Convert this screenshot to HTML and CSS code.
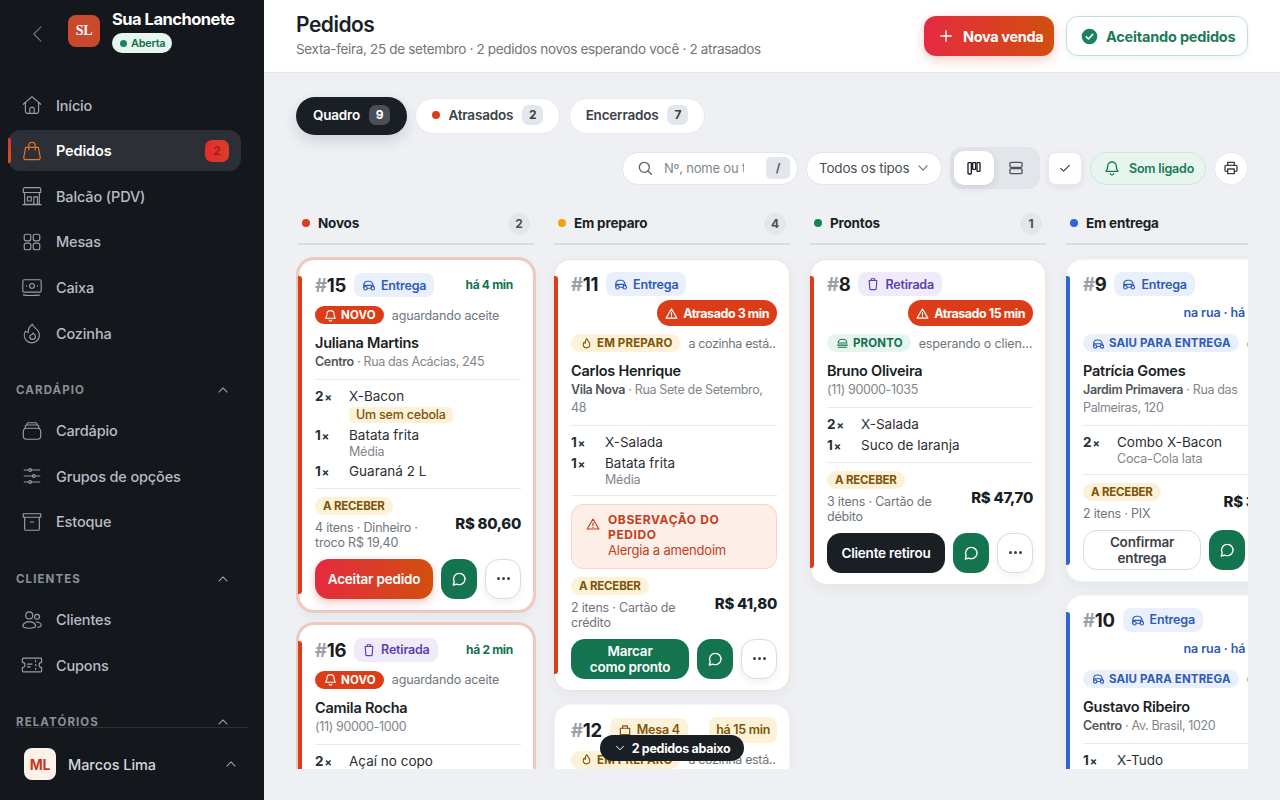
FILE: index.html
```html
<!DOCTYPE html>
<html lang="pt-BR">
<head>
    <meta charset="UTF-8">
    <meta name="viewport" content="width=device-width, initial-scale=1.0">
    <title>Pedidos</title>
    <link rel="stylesheet" href="styles.css">
</head>
<body>

<!-- Icon sprite -->
<svg class="sprite" xmlns="http://www.w3.org/2000/svg">
    <symbol id="i-back" viewBox="0 0 24 24"><path d="M15.5 3.5 7 12l8.5 8.5"/></symbol>
    <symbol id="i-home" viewBox="0 0 24 24"><path d="M2.5 11.2 12 2.8l9.5 8.4"/><path d="M4.8 9.4v9.8a2 2 0 0 0 2 2h10.4a2 2 0 0 0 2-2V9.4"/><path d="M9.6 21.2v-5a1.6 1.6 0 0 1 1.6-1.6h1.6a1.6 1.6 0 0 1 1.6 1.6v5"/></symbol>
    <symbol id="i-bag" viewBox="0 0 24 24"><path d="M5 8h14l2 11a2 2 0 0 1-2 2.4H5A2 2 0 0 1 3 19z"/><path d="M8.5 11V6a3.5 3.5 0 0 1 7 0v5"/></symbol>
    <symbol id="i-store" viewBox="0 0 24 24"><path d="M4.5 2.8h15a2 2 0 0 1 2 2v3.4h-19V4.8a2 2 0 0 1 2-2z"/><path d="M4 8.2v13h16v-13"/><path d="M2 21.4h20"/><path d="M14 21v-8h4v8"/><path d="M7 13h4.2v4.4H7z"/></symbol>
    <symbol id="i-grid" viewBox="0 0 24 24"><rect x="3.5" y="3.5" width="7.2" height="7.2" rx="2.2"/><rect x="13.3" y="3.5" width="7.2" height="7.2" rx="2.2"/><rect x="3.5" y="13.3" width="7.2" height="7.2" rx="2.2"/><rect x="13.3" y="13.3" width="7.2" height="7.2" rx="2.2"/></symbol>
    <symbol id="i-cash" viewBox="0 0 24 24"><rect x="2" y="3" width="20" height="13.5" rx="1.5"/><circle cx="12" cy="9.7" r="2.6"/><path d="M5.8 9.7h.4M17.8 9.7h.4"/><path d="M2.5 19.5c6 1.5 12 .3 17.5.3"/></symbol>
    <symbol id="i-flame" viewBox="0 0 24 24"><path d="M12.5 2.5c.3 3 4 4.2 6 7a8.3 8.3 0 1 1-13.6.3c.8 1.1 2 1.7 3.1 1.7-.2-3.5 1.5-7 4.5-9z"/><path d="M12.5 19a3.3 3.3 0 0 0 3.3-3.3c0-1.7-1.3-2.7-2.8-3.7-.2 1.4-1 2-2.2 2.2-.7.3-1.2 1-1.2 1.8a3 3 0 0 0 2.9 3z"/></symbol>
    <symbol id="i-stack" viewBox="0 0 24 24"><rect x="2.5" y="9" width="19" height="12" rx="3.5"/><path d="M4.5 9V7.5a2 2 0 0 1 2-2h11a2 2 0 0 1 2 2V9"/><path d="M6.5 5.5v-1A1.5 1.5 0 0 1 8 3h8a1.5 1.5 0 0 1 1.5 1.5v1"/></symbol>
    <symbol id="i-sliders" viewBox="0 0 24 24"><path d="M3.5 5.5h5M11.5 5.5h9M3.5 12h9M15.5 12h5M3.5 18.5h5M11.5 18.5h9"/><circle cx="10" cy="5.5" r="1.5"/><circle cx="14" cy="12" r="1.5"/><circle cx="10" cy="18.5" r="1.5"/></symbol>
    <symbol id="i-archive" viewBox="0 0 24 24"><path d="M2.5 3h19v3.8h-19z"/><path d="M4 6.8v12.7a1.5 1.5 0 0 0 1.5 1.5h13a1.5 1.5 0 0 0 1.5-1.5V6.8"/><path d="M10 12h4"/></symbol>
    <symbol id="i-users" viewBox="0 0 24 24"><circle cx="9" cy="7" r="3.8"/><circle cx="17.5" cy="8.5" r="2.7"/><path d="M9 13.8c-3.8 0-7 2.2-7 4.6 0 1.7 3 2.6 7 2.6s7-.9 7-2.6c0-2.4-3.2-4.6-7-4.6z"/><path d="M16.5 14.2c3 0 5.5 1.5 5.5 3.5 0 1.3-1.5 2-3.8 2.2"/></symbol>
    <symbol id="i-ticket" viewBox="0 0 24 24"><path d="M2.5 4.5h19a1 1 0 0 1 1 1v3.7a2.8 2.8 0 0 0 0 5.6v3.7a1 1 0 0 1-1 1h-19a1 1 0 0 1-1-1v-3.7a2.8 2.8 0 0 0 0-5.6V5.5a1 1 0 0 1 1-1z"/><path d="M16 7v1.5M16 11.2v1.6M16 15.5V17M7 11h5M7 14h3"/></symbol>
    <symbol id="i-up" viewBox="0 0 24 24"><path d="m5 15.5 7-7 7 7"/></symbol>
    <symbol id="i-down" viewBox="0 0 24 24"><path d="m5 8.5 7 7 7-7"/></symbol>
    <symbol id="i-plus" viewBox="0 0 24 24"><path d="M12 4v16M4 12h16"/></symbol>
    <symbol id="i-search" viewBox="0 0 24 24"><circle cx="11" cy="11" r="7.5"/><path d="m16.5 16.5 5 5"/></symbol>
    <symbol id="i-kanban" viewBox="0 0 24 24"><rect x="3" y="4" width="5" height="17" rx="1"/><rect x="10" y="4" width="4.5" height="10" rx=".8"/><rect x="16.5" y="4" width="4.5" height="13" rx="1"/></symbol>
    <symbol id="i-rows" viewBox="0 0 24 24"><rect x="3" y="3.5" width="18" height="7.5" rx="1.5"/><rect x="3" y="13" width="18" height="7.5" rx="1.5"/></symbol>
    <symbol id="i-check" viewBox="0 0 24 24"><path d="m4.5 12.5 5 5 10-10"/></symbol>
    <symbol id="i-bell" viewBox="0 0 24 24"><path d="M12 3a6.5 6.5 0 0 0-6.5 6.5c0 4.5-1.5 6-2.5 7.5h18c-1-1.5-2.5-3-2.5-7.5A6.5 6.5 0 0 0 12 3z"/><path d="M9.5 20.5a2.6 2.6 0 0 0 5 0"/></symbol>
    <symbol id="i-print" viewBox="0 0 24 24"><path d="M7 8V3.5h10V8"/><path d="M7 17H4.5A1.5 1.5 0 0 1 3 15.500v-6A1.5 1.5 0 0 1 4.5 8h15A1.5 1.5 0 0 1 21 9.500v6a1.5 1.5 0 0 1-1.5 1.5H17"/><path d="M7 13.5h10v7H7z"/></symbol>
    <symbol id="i-scooter" viewBox="0 0 24 24"><circle cx="6" cy="17.5" r="3"/><circle cx="18.5" cy="17.5" r="3"/><path d="M3 16v-3.5C3 8.5 6 5.5 10 5.5h3c2.5 0 4.3 1.5 5 4l2 5.5"/><path d="M9 17.5h6.5l1.5-5H4"/></symbol>
    <symbol id="i-cup" viewBox="0 0 24 24"><path d="M5.5 6h13l-1 14a1.5 1.5 0 0 1-1.5 1.5H8A1.5 1.5 0 0 1 6.5 20z"/><path d="M9 6V3h6v3"/></symbol>
    <symbol id="i-alert" viewBox="0 0 24 24"><path d="M12 3.5 2 20.5h20z"/><path d="M12 10v5M12 17.6v.4"/></symbol>
    <symbol id="i-fire" viewBox="0 0 24 24"><path d="M12.5 3c.5 3 5.5 5.5 5.5 11a6 6 0 0 1-12 0c0-2 .8-3.5 1.8-4.5.3 1.3 1 2 2 2.2C9.5 8.5 10.5 5 12.5 3z"/></symbol>
    <symbol id="i-burger" viewBox="0 0 24 24"><path d="M4 11a8 7 0 0 1 16 0z"/><path d="M3 15h18"/><path d="M4.5 19h15"/></symbol>
    <symbol id="i-chat" viewBox="0 0 24 24"><path d="M12.5 3.5a8.5 8.5 0 1 1-3.8 16.1L3.5 21l1.3-5a8.5 8.5 0 0 1 7.7-12.500z"/></symbol>
    <symbol id="i-table" viewBox="0 0 24 24"><path d="M4 9h16v11H4z"/><path d="M8 9V5h8v4"/></symbol>
</svg>

<div class="app">

    <!-- Sidebar -->
    <aside class="sidebar">
        <div class="brand">
            <button class="back"><svg class="ico"><use href="#i-back"/></svg></button>
            <div class="logo">SL</div>
            <div class="brand-txt">
                <div class="brand-name">Sua Lanchonete</div>
                <span class="open-pill"><i></i>Aberta</span>
            </div>
        </div>

        <nav class="nav">
            <a class="nav-item"><svg class="ico"><use href="#i-home"/></svg>Início</a>
            <a class="nav-item active"><svg class="ico"><use href="#i-bag"/></svg>Pedidos<span class="nav-badge">2</span></a>
            <a class="nav-item"><svg class="ico"><use href="#i-store"/></svg>Balcão (PDV)</a>
            <a class="nav-item"><svg class="ico"><use href="#i-grid"/></svg>Mesas</a>
            <a class="nav-item"><svg class="ico"><use href="#i-cash"/></svg>Caixa</a>
            <a class="nav-item"><svg class="ico"><use href="#i-flame"/></svg>Cozinha</a>

            <div class="nav-head">CARDÁPIO<svg class="ico"><use href="#i-up"/></svg></div>
            <a class="nav-item"><svg class="ico"><use href="#i-stack"/></svg>Cardápio</a>
            <a class="nav-item"><svg class="ico"><use href="#i-sliders"/></svg>Grupos de opções</a>
            <a class="nav-item"><svg class="ico"><use href="#i-archive"/></svg>Estoque</a>

            <div class="nav-head">CLIENTES<svg class="ico"><use href="#i-up"/></svg></div>
            <a class="nav-item"><svg class="ico"><use href="#i-users"/></svg>Clientes</a>
            <a class="nav-item"><svg class="ico"><use href="#i-ticket"/></svg>Cupons</a>

            <div class="nav-head">RELATÓRIOS<svg class="ico"><use href="#i-up"/></svg></div>
        </nav>

        <div class="user">
            <div class="avatar">ML</div>
            <span class="user-name">Marcos Lima</span>
            <svg class="ico"><use href="#i-up"/></svg>
        </div>
    </aside>

    <main class="main">
        <header class="topbar">
            <div>
                <h1>Pedidos</h1>
                <p>Sexta-feira, 25 de setembro · 2 pedidos novos esperando você · 2 atrasados</p>
            </div>
            <div class="top-actions">
                <button class="btn-new"><svg class="ico"><use href="#i-plus"/></svg>Nova venda</button>
                <button class="btn-accepting">
                    <svg class="ico" viewBox="0 0 24 24"><circle cx="12" cy="12" r="10" class="solid"/><path d="m7.5 12.5 3 3 6-6.5" class="tick"/></svg>
                    Aceitando pedidos
                </button>
            </div>
        </header>

        <section class="content">
            <div class="tabs">
                <a class="tab on">Quadro<span class="tab-n">9</span></a>
                <a class="tab"><i class="dot red"></i>Atrasados<span class="tab-n">2</span></a>
                <a class="tab">Encerrados<span class="tab-n">7</span></a>
            </div>

            <div class="toolbar">
                <div class="search">
                    <svg class="ico"><use href="#i-search"/></svg>
                    <span class="ph">Nº, nome ou t</span>
                    <kbd>/</kbd>
                </div>
                <div class="select">Todos os tipos<svg class="ico"><use href="#i-down"/></svg></div>
                <div class="seg">
                    <span class="seg-btn on"><svg class="ico"><use href="#i-kanban"/></svg></span>
                    <span class="seg-btn"><svg class="ico"><use href="#i-rows"/></svg></span>
                </div>
                <span class="sq-btn"><svg class="ico"><use href="#i-check"/></svg></span>
                <span class="sound"><svg class="ico"><use href="#i-bell"/></svg>Som ligado</span>
                <span class="round-btn"><svg class="ico"><use href="#i-print"/></svg></span>
            </div>

            <div class="board">

                <!-- Novos -->
                <div class="col">
                    <div class="col-head"><i class="dot red"></i>Novos<span class="col-n">2</span></div>
                    <div class="cards">
                        <article class="card ring bar-red">
                            <div class="card-top">
                                <span class="num"><i>#</i>15</span>
                                <span class="chip blue"><svg class="ico"><use href="#i-scooter"/></svg>Entrega</span>
                                <span class="age">há 4 min</span>
                            </div>
                            <div class="status">
                                <span class="st st-new"><svg class="ico"><use href="#i-bell"/></svg>NOVO</span>
                                <span class="st-note">aguardando aceite</span>
                            </div>
                            <p class="cust">Juliana Martins</p>
                            <p class="addr"><b>Centro</b> · Rua das Acácias, 245</p>
                            <ul class="items">
                                <li><span class="qty">2<small>×</small></span><div>X-Bacon<em class="note">Um sem cebola</em></div></li>
                                <li><span class="qty">1<small>×</small></span><div>Batata frita<span class="sub">Média</span></div></li>
                                <li><span class="qty">1<small>×</small></span><div>Guaraná 2 L</div></li>
                            </ul>
                            <div class="pay">
                                <div class="pay-l"><span class="pay-tag">A RECEBER</span><p>4 itens · Dinheiro · troco R$ 19,40</p></div>
                                <strong class="price">R$ 80,60</strong>
                            </div>
                            <div class="acts">
                                <button class="act act-red">Aceitar pedido</button>
                                <button class="act-ico green"><svg class="ico"><use href="#i-chat"/></svg></button>
                                <button class="act-ico more"><span></span><span></span><span></span></button>
                            </div>
                        </article>

                        <article class="card ring bar-red">
                            <div class="card-top">
                                <span class="num"><i>#</i>16</span>
                                <span class="chip purple"><svg class="ico"><use href="#i-cup"/></svg>Retirada</span>
                                <span class="age">há 2 min</span>
                            </div>
                            <div class="status">
                                <span class="st st-new"><svg class="ico"><use href="#i-bell"/></svg>NOVO</span>
                                <span class="st-note">aguardando aceite</span>
                            </div>
                            <p class="cust">Camila Rocha</p>
                            <p class="addr">(11) 90000-1000</p>
                            <ul class="items">
                                <li><span class="qty">2<small>×</small></span><div>Açaí no copo</div></li>
                            </ul>
                        </article>
                    </div>
                </div>

                <!-- Em preparo -->
                <div class="col">
                    <div class="col-head"><i class="dot amber"></i>Em preparo<span class="col-n">4</span></div>
                    <div class="cards">
                        <article class="card late bar-red">
                            <div class="card-top">
                                <span class="num"><i>#</i>11</span>
                                <span class="chip blue"><svg class="ico"><use href="#i-scooter"/></svg>Entrega</span>
                                <span class="late-pill"><svg class="ico"><use href="#i-alert"/></svg>Atrasado 3 min</span>
                            </div>
                            <div class="status">
                                <span class="st st-prep"><svg class="ico"><use href="#i-fire"/></svg>EM PREPARO</span>
                                <span class="st-note">a cozinha está…</span>
                            </div>
                            <p class="cust">Carlos Henrique</p>
                            <p class="addr"><b>Vila Nova</b> · Rua Sete de Setembro, 48</p>
                            <ul class="items">
                                <li><span class="qty">1<small>×</small></span><div>X-Salada</div></li>
                                <li><span class="qty">1<small>×</small></span><div>Batata frita<span class="sub">Média</span></div></li>
                            </ul>
                            <div class="obs">
                                <svg class="ico"><use href="#i-alert"/></svg>
                                <div><strong>OBSERVAÇÃO DO PEDIDO</strong><span>Alergia a amendoim</span></div>
                            </div>
                            <div class="pay">
                                <div class="pay-l"><span class="pay-tag">A RECEBER</span><p>2 itens · Cartão de crédito</p></div>
                                <strong class="price">R$ 41,80</strong>
                            </div>
                            <div class="acts">
                                <button class="act act-green">Marcar<br>como pronto</button>
                                <button class="act-ico green"><svg class="ico"><use href="#i-chat"/></svg></button>
                                <button class="act-ico more"><span></span><span></span><span></span></button>
                            </div>
                        </article>

                        <article class="card">
                            <div class="card-top">
                                <span class="num"><i>#</i>12</span>
                                <span class="chip amber"><svg class="ico"><use href="#i-table"/></svg>Mesa 4</span>
                                <span class="age age-warn">há 15 min</span>
                            </div>
                            <div class="status">
                                <span class="st st-prep"><svg class="ico"><use href="#i-fire"/></svg>EM PREPARO</span>
                                <span class="st-note">a cozinha está…</span>
                            </div>
                        </article>
                    </div>
                    <div class="more-below"><svg class="ico"><use href="#i-down"/></svg>2 pedidos abaixo</div>
                </div>

                <!-- Prontos -->
                <div class="col">
                    <div class="col-head"><i class="dot green"></i>Prontos<span class="col-n">1</span></div>
                    <div class="cards">
                        <article class="card late bar-red">
                            <div class="card-top">
                                <span class="num"><i>#</i>8</span>
                                <span class="chip purple"><svg class="ico"><use href="#i-cup"/></svg>Retirada</span>
                                <span class="late-pill"><svg class="ico"><use href="#i-alert"/></svg>Atrasado 15 min</span>
                            </div>
                            <div class="status">
                                <span class="st st-ready"><svg class="ico"><use href="#i-burger"/></svg>PRONTO</span>
                                <span class="st-note">esperando o clien…</span>
                            </div>
                            <p class="cust">Bruno Oliveira</p>
                            <p class="addr">(11) 90000-1035</p>
                            <ul class="items">
                                <li><span class="qty">2<small>×</small></span><div>X-Salada</div></li>
                                <li><span class="qty">1<small>×</small></span><div>Suco de laranja</div></li>
                            </ul>
                            <div class="pay">
                                <div class="pay-l"><span class="pay-tag">A RECEBER</span><p>3 itens · Cartão de débito</p></div>
                                <strong class="price">R$ 47,70</strong>
                            </div>
                            <div class="acts">
                                <button class="act act-dark">Cliente retirou</button>
                                <button class="act-ico green"><svg class="ico"><use href="#i-chat"/></svg></button>
                                <button class="act-ico more"><span></span><span></span><span></span></button>
                            </div>
                        </article>
                    </div>
                </div>

                <!-- Em entrega -->
                <div class="col">
                    <div class="col-head"><i class="dot blue-dot"></i>Em entrega<span class="col-n">2</span></div>
                    <div class="cards">
                        <article class="card bar-blue">
                            <div class="card-top">
                                <span class="num"><i>#</i>9</span>
                                <span class="chip blue"><svg class="ico"><use href="#i-scooter"/></svg>Entrega</span>
                                <span class="age age-blue">na rua · há 3 min</span>
                            </div>
                            <div class="status">
                                <span class="st st-road"><svg class="ico"><use href="#i-scooter"/></svg>SAIU PARA ENTREGA</span>
                                <span class="st-note">com o entregador</span>
                            </div>
                            <p class="cust">Patrícia Gomes</p>
                            <p class="addr"><b>Jardim Primavera</b> · Rua das Palmeiras, 120</p>
                            <ul class="items">
                                <li><span class="qty">2<small>×</small></span><div>Combo X-Bacon<span class="sub">Coca-Cola lata</span></div></li>
                            </ul>
                            <div class="pay">
                                <div class="pay-l"><span class="pay-tag">A RECEBER</span><p>2 itens · PIX</p></div>
                                <strong class="price">R$ 39,90</strong>
                            </div>
                            <div class="acts">
                                <button class="act act-white">Confirmar<br>entrega</button>
                                <button class="act-ico green"><svg class="ico"><use href="#i-chat"/></svg></button>
                                <button class="act-ico more"><span></span><span></span><span></span></button>
                            </div>
                        </article>

                        <article class="card bar-blue">
                            <div class="card-top">
                                <span class="num"><i>#</i>10</span>
                                <span class="chip blue"><svg class="ico"><use href="#i-scooter"/></svg>Entrega</span>
                                <span class="age age-blue">na rua · há 2 min</span>
                            </div>
                            <div class="status">
                                <span class="st st-road"><svg class="ico"><use href="#i-scooter"/></svg>SAIU PARA ENTREGA</span>
                                <span class="st-note">com o entregador</span>
                            </div>
                            <p class="cust">Gustavo Ribeiro</p>
                            <p class="addr"><b>Centro</b> · Av. Brasil, 1020</p>
                            <ul class="items">
                                <li><span class="qty">1<small>×</small></span><div>X-Tudo</div></li>
                            </ul>
                        </article>
                    </div>
                </div>
            </div>
        </section>
    </main>
</div>

</body>
</html>
```

FILE: styles.css
```css
* {
    margin: 0;
    padding: 0;
    box-sizing: border-box;
}
html, body {
    height: 100%;
    overflow: hidden;
}
body {
    font-family: Inter, "Noto Sans", Arial, sans-serif;
    background-color: #eef0f4;
    color: #1a1f25;
    font-size: 13px;
    letter-spacing: -0.2px;
}
button {
    font-family: inherit;
    letter-spacing: inherit;
    border: none;
    background: none;
}
ul {
    list-style: none;
}
.sprite {
    display: none;
}
.ico {
    display: block;
    flex: none;
    width: 16px;
    height: 16px;
    fill: none;
    stroke: currentColor;
    stroke-width: 2;
    stroke-linecap: round;
    stroke-linejoin: round;
}
.app {
    display: flex;
    height: 100vh;
}

/* Sidebar */
.sidebar {
    width: 264px;
    flex: none;
    display: flex;
    flex-direction: column;
    background-color: #14171c;
    color: #b8bcc6;
}
.brand {
    flex: none;
    display: flex;
    gap: 12px;
    height: 84.7px;
    padding: 8px 0 0 28px;
}
.back {
    color: #6f747c;
    margin-top: 16px;
    margin-right: 8px;
    height: 20px;
}
.back .ico {
    width: 20px;
    height: 20px;
    stroke-width: 1.4;
}
.logo {
    width: 32px;
    height: 32px;
    margin-top: 7px;
    border-radius: 8px;
    background-color: #c9492d;
    color: #fff;
    font: bold 14px "Liberation Serif", serif;
    display: flex;
    align-items: center;
    justify-content: center;
}
.brand-name {
    color: #fff;
    font-size: 16.5px;
    font-weight: 700;
    line-height: 22px;
    letter-spacing: -0.5px;
}
.open-pill {
    display: inline-flex;
    align-items: center;
    gap: 4px;
    height: 20px;
    margin-top: 3px;
    padding: 0 7px 0 8px;
    border-radius: 10px;
    background-color: #e6f6ef;
    color: #13704f;
    font-size: 11px;
    font-weight: 600;
    letter-spacing: -0.3px;
}
.open-pill i {
    width: 7px;
    height: 7px;
    border-radius: 50%;
    background-color: #18875f;
}
.nav {
    flex: 1;
    min-height: 0;
    overflow: hidden;
    padding: 0 23px 0 8px;
    display: flex;
    flex-direction: column;
    gap: 4.6px;
}
.nav-item {
    position: relative;
    flex: none;
    height: 41px;
    display: flex;
    align-items: center;
    gap: 13px;
    padding-left: 13px;
    border-radius: 12px;
    font-size: 14.5px;
    font-weight: 500;
    letter-spacing: -0.15px;
}
.nav-item .ico {
    width: 22px;
    height: 22px;
    stroke-width: 1.25;
    color: #9a9ea6;
}
.nav-item.active {
    background-color: #2c2f35;
    color: #fff;
    font-weight: 600;
}
.nav-item.active .ico {
    color: #e8762a;
}
.nav-item.active::before {
    content: "";
    position: absolute;
    left: 0;
    top: 8px;
    bottom: 8px;
    width: 3px;
    border-radius: 0 2px 2px 0;
    background: linear-gradient(#e5293f, #d9560f);
}
.nav-badge {
    margin-left: auto;
    margin-right: 12px;
    width: 24px;
    height: 22px;
    border-radius: 7px;
    background: linear-gradient(90deg, #e32c30, #d93f25);
    color: #a81d22;
    font-size: 12px;
    font-weight: 700;
    text-align: center;
    line-height: 22px;
}
.nav-head {
    flex: none;
    height: 20px;
    margin: 22px 0 5.4px;
    padding: 0 11px 0 8px;
    display: flex;
    align-items: center;
    justify-content: space-between;
    color: #8b8f96;
    font-size: 11.5px;
    font-weight: 700;
    letter-spacing: 1.1px;
}
.nav-head .ico {
    width: 14px;
    height: 14px;
    stroke-width: 1.8;
    color: #a2a6ad;
}
.user {
    flex: none;
    height: 73px;
    margin: 0 16px;
    padding: 0 10px 0 8px;
    border-top: 1px solid #2c2f35;
    display: flex;
    align-items: center;
    gap: 12px;
    color: #d5d7dc;
}
.avatar {
    width: 32px;
    height: 32px;
    border-radius: 8px;
    background-color: #fdf1ea;
    color: #c93a1c;
    font-size: 14px;
    font-weight: 700;
    display: flex;
    align-items: center;
    justify-content: center;
}
.user-name {
    flex: 1;
    font-size: 14.5px;
    font-weight: 500;
    letter-spacing: -0.05px;
}
.user .ico {
    width: 14px;
    height: 14px;
    stroke-width: 1.8;
    color: #a2a6ad;
}

/* Main */
.main {
    flex: 1;
    min-width: 0;
    display: flex;
    flex-direction: column;
}
.topbar {
    flex: none;
    height: 73px;
    padding: 0 32px 2px;
    background-color: #fff;
    border-bottom: 1px solid #e2e5e9;
    display: flex;
    align-items: center;
    justify-content: space-between;
}
.topbar h1 {
    font-size: 21px;
    font-weight: 600;
    line-height: 26px;
    letter-spacing: -0.5px;
}
.topbar p {
    margin-top: 2px;
    font-size: 13.5px;
    line-height: 18px;
    color: #70757c;
    letter-spacing: -0.32px;
}
.top-actions {
    display: flex;
    gap: 12px;
    margin-bottom: -2px;
}
.btn-new, .btn-accepting {
    height: 40px;
    border-radius: 12px;
    display: flex;
    align-items: center;
    font-size: 14.5px;
    font-weight: 700;
}
.btn-new {
    width: 130px;
    padding-left: 14px;
    gap: 9px;
    color: #fff;
    background: linear-gradient(90deg, #e52a40, #d14f0e);
    box-shadow: 0 4px 12px rgba(226, 60, 40, 0.25);
    letter-spacing: -0.35px;
}
.btn-accepting {
    width: 182px;
    padding-left: 14px;
    gap: 8px;
    color: #1a7a56;
    background-color: #fff;
    border: 1px solid #bfe0d2;
    box-shadow: 0 2px 6px rgba(20, 110, 80, 0.08);
}
.btn-accepting .ico {
    width: 17px;
    height: 17px;
}
.btn-accepting .solid {
    fill: #18835c;
    stroke: #18835c;
}
.btn-accepting .tick {
    stroke: #fff;
    stroke-width: 2.2;
}
.content {
    flex: 1;
    min-height: 0;
    display: flex;
    flex-direction: column;
    padding: 24px 32px 31px;
}
.tabs {
    display: flex;
    align-items: center;
    gap: 8.5px;
}
.tab {
    height: 36px;
    display: flex;
    align-items: center;
    gap: 8px;
    padding: 0 16px 2px;
    border-radius: 18px;
    background-color: #fff;
    border: 1px solid #e6e8ec;
    color: #3a4048;
    font-size: 13.5px;
    font-weight: 600;
}
.tab.on {
    height: 38px;
    padding: 0 17px 2px;
    border: none;
    border-radius: 19px;
    background-color: #1a1f25;
    color: #fff;
    box-shadow: 0 6px 14px rgba(26, 31, 37, 0.14);
}
.tab-n {
    min-width: 21px;
    height: 20px;
    margin-left: 1px;
    border-radius: 7px;
    background-color: #e3e6ea;
    color: #3a4048;
    font-size: 12px;
    font-weight: 700;
    line-height: 20px;
    text-align: center;
}
.tab.on .tab-n {
    background-color: #4b5057;
    color: #fff;
}
.dot {
    flex: none;
    width: 8px;
    height: 8px;
    border-radius: 50%;
}
.dot.red { background-color: #dc3d18; }
.dot.amber { background-color: #f3a20f; }
.dot.green { background-color: #14855b; }
.dot.blue-dot { background-color: #2f63d6; }
.toolbar {
    flex: none;
    margin-top: 12px;
    display: flex;
    align-items: center;
    justify-content: flex-end;
    gap: 8px;
}
.search, .select {
    height: 33px;
    display: flex;
    align-items: center;
    background-color: #fff;
    border: 1px solid #e2e5e9;
    border-radius: 16px;
    font-size: 13.5px;
    color: #4a4f57;
}
.search {
    width: 176px;
    padding: 0 7px 0 14px;
    gap: 11px;
}
.search .ico {
    color: #5c6168;
}
.ph {
    flex: none;
    width: 80px;
    margin-right: auto;
    font-size: 13px;
    color: #80858c;
    overflow: hidden;
    white-space: nowrap;
}
kbd {
    width: 24px;
    height: 22px;
    border-radius: 5px;
    background-color: #e3e6ea;
    color: #5c6168;
    font-family: inherit;
    font-size: 12px;
    font-weight: 700;
    text-align: center;
    line-height: 22px;
}
.select {
    width: 136px;
    justify-content: space-between;
    padding: 0 11px 0 12px;
}
.select .ico {
    width: 14px;
    height: 14px;
    color: #6b7078;
}
.seg {
    display: flex;
    gap: 2px;
    padding: 4px;
    background-color: #e2e5e9;
    border-radius: 12px;
}
.seg-btn {
    width: 40px;
    height: 34px;
    border-radius: 10px;
    display: flex;
    align-items: center;
    justify-content: center;
    color: #50555c;
}
.seg-btn.on {
    background-color: #fff;
    color: #1a1f25;
    box-shadow: 0 3px 8px rgba(26, 31, 37, 0.1);
}
.sq-btn, .round-btn {
    width: 34px;
    height: 33px;
    display: flex;
    align-items: center;
    justify-content: center;
    background-color: #fff;
    border: 1px solid #e6e8ec;
    color: #3a4048;
}
.sq-btn {
    border-radius: 8px;
    box-shadow: 0 2px 6px rgba(26, 31, 37, 0.08);
}
.sq-btn .ico {
    width: 14px;
    height: 14px;
}
.round-btn {
    border-radius: 50%;
}
.sound {
    width: 116px;
    height: 33px;
    display: flex;
    align-items: center;
    gap: 9px;
    padding-left: 13px;
    background-color: #e6f6ef;
    border: 1px solid #c8e8da;
    border-radius: 17px;
    color: #1a7a56;
    font-size: 12.5px;
    font-weight: 600;
}

/* Board */
.board {
    flex: 1;
    min-height: 0;
    margin-top: 8px;
    padding: 16px 0 0 2px;
    display: flex;
    gap: 20px;
    overflow: hidden;
}
.col {
    position: relative;
    flex: none;
    width: 236px;
}
.col-head {
    height: 32px;
    display: flex;
    align-items: flex-start;
    gap: 8px;
    padding: 0 4px 0;
    margin-bottom: 14px;
    border-bottom: 2px solid #d8dbe0;
    font-size: 13.5px;
    font-weight: 700;
    line-height: 20px;
}
.col-head .dot {
    margin-top: 6px;
}
.col-n {
    margin-left: auto;
    width: 22px;
    height: 22px;
    border-radius: 50%;
    background-color: #e3e6ea;
    color: #4a4f57;
    font-size: 12px;
    font-weight: 700;
    line-height: 22px;
    text-align: center;
}
.cards {
    display: flex;
    flex-direction: column;
    gap: 13px;
}
.card {
    position: relative;
    flex: none;
    padding: 12px 12px 11px 16px;
    background-color: #fff;
    border: 1px solid #f3f4f6;
    border-radius: 16px;
    box-shadow: 0 4px 14px rgba(26, 31, 37, 0.05);
}
.card.late {
    border-color: #f6e0d4;
}
.card.ring {
    border-color: #eec9bd;
    box-shadow: 0 0 0 2px #eec9bd, 0 6px 14px rgba(26, 31, 37, 0.05);
}
.bar-red::before, .bar-blue::before {
    content: "";
    position: absolute;
    left: -1px;
    top: 16px;
    bottom: 16px;
    width: 4px;
    border-radius: 0 3px 3px 0;
    background-color: #dc3d18;
}
.bar-blue::before {
    background-color: #2f63d6;
}
.card-top {
    display: flex;
    flex-wrap: wrap;
    align-items: center;
    gap: 4px 8px;
    min-height: 24px;
}
.num {
    font-size: 18.5px;
    font-weight: 700;
    letter-spacing: -0.3px;
}
.num i {
    font-style: normal;
    color: #9aa0a8;
}
.chip {
    height: 24px;
    display: flex;
    align-items: center;
    gap: 5px;
    padding: 0 8px;
    border-radius: 8px;
    font-size: 12.5px;
    font-weight: 600;
}
.chip .ico {
    width: 14px;
    height: 14px;
}
.chip.blue { background-color: #e9f0fc; color: #2f5bb7; }
.chip.purple { background-color: #efebfb; color: #5a41b0; }
.chip.amber { background-color: #fdf1d8; color: #7d5408; }
.age {
    margin-left: auto;
    height: 26px;
    padding: 0 8px;
    border-radius: 8px;
    color: #13704f;
    font-size: 12px;
    font-weight: 700;
    line-height: 26px;
    letter-spacing: -0.3px;
}
.age-warn {
    background-color: #fdf1d8;
    color: #7d5408;
    font-size: 12.5px;
    font-weight: 600;
    padding: 0 7px;
}
.age-blue {
    color: #2f5bb7;
    font-size: 12.5px;
    font-weight: 600;
    letter-spacing: -0.1px;
}
.late-pill {
    margin-left: auto;
    height: 26px;
    display: flex;
    align-items: center;
    gap: 5px;
    padding: 0 8px;
    border-radius: 13px;
    background-color: #dc3d18;
    color: #fff;
    font-size: 12.5px;
    font-weight: 700;
    letter-spacing: -0.45px;
    white-space: nowrap;
}
.late-pill .ico {
    width: 13px;
    height: 13px;
}
.status {
    margin-top: 8px;
    display: flex;
    align-items: center;
    gap: 8px;
    height: 18px;
}
.st {
    flex: none;
    height: 18px;
    display: flex;
    align-items: center;
    gap: 4px;
    padding: 0 8px 0 9px;
    border-radius: 9px;
    font-size: 11.5px;
    font-weight: 700;
    letter-spacing: 0.15px;
}
.st .ico {
    width: 13px;
    height: 13px;
}
.st-new { background-color: #dc3d18; color: #fff; }
.st-prep { background-color: #fdf1d8; color: #7d5408; }
.st-ready { background-color: #e6f6ef; color: #13704f; }
.st-road { background-color: #e9f0fc; color: #2f5bb7; }
.st-note {
    min-width: 0;
    overflow: hidden;
    white-space: nowrap;
    color: #70757c;
    font-size: 12.5px;
    letter-spacing: -0.15px;
}
.st-prep + .st-note {
    letter-spacing: -0.35px;
}
.cust {
    margin-top: 9px;
    font-size: 14.5px;
    font-weight: 600;
    line-height: 20px;
    letter-spacing: -0.25px;
}
.addr {
    font-size: 12.5px;
    line-height: 18px;
    color: #80858c;
    letter-spacing: -0.35px;
}
.addr b {
    color: #50555c;
    font-weight: 600;
}
.items {
    margin-top: 8px;
    padding: 7px 0 8px;
    border-top: 1px solid #e6e8ec;
    border-bottom: 1px solid #e6e8ec;
    display: flex;
    flex-direction: column;
    gap: 3px;
    font-size: 13.5px;
    line-height: 18px;
    letter-spacing: 0;
    color: #2a2f36;
}
.items li {
    display: flex;
}
.qty {
    flex: none;
    width: 34px;
    font-weight: 700;
}
.qty small {
    font-size: 11px;
    line-height: 0;
    margin-left: 1px;
}
.note {
    display: block;
    width: fit-content;
    height: 16px;
    margin-top: 2px;
    padding: 0 7px;
    border-radius: 5px;
    background-color: #fdf1d8;
    color: #7d5408;
    font-style: normal;
    font-size: 12.5px;
    font-weight: 500;
    line-height: 16px;
    letter-spacing: -0.2px;
}
.sub {
    display: block;
    color: #80858c;
    font-size: 12.5px;
    line-height: 15px;
    letter-spacing: -0.2px;
}
.obs {
    margin-top: 8px;
    display: flex;
    gap: 8px;
    padding: 7px 12px 9px 14px;
    border: 1px solid #f6d5c8;
    border-radius: 12px;
    background-color: #fdeee8;
    color: #c43d1c;
}
.obs .ico {
    width: 14px;
    height: 14px;
    margin-top: 5px;
}
.obs strong {
    display: block;
    max-width: 130px;
    font-size: 12px;
    font-weight: 700;
    letter-spacing: 0.6px;
    line-height: 15px;
}
.obs span {
    display: block;
    font-size: 13px;
    line-height: 17px;
}
.pay {
    margin-top: 8px;
    display: flex;
    align-items: center;
    justify-content: space-between;
    gap: 8px;
}
.pay-l {
    flex: 1;
    min-width: 0;
}
.pay-tag {
    display: block;
    width: fit-content;
    height: 18px;
    padding: 0 8px;
    border-radius: 9px;
    background-color: #fdf1d8;
    color: #7d5408;
    font-size: 11.5px;
    font-weight: 700;
    line-height: 18px;
}
.pay-l p {
    margin-top: 4.5px;
    color: #70757c;
    font-size: 12.5px;
    line-height: 15px;
    max-width: 122px;
}
.price {
    flex: none;
    font-size: 15px;
    font-weight: 800;
    letter-spacing: -0.3px;
}
.acts {
    margin-top: 9px;
    display: flex;
    gap: 8px;
}
.act {
    flex: 1;
    min-width: 0;
    height: 40px;
    border-radius: 14px;
    font-size: 13.5px;
    font-weight: 600;
    line-height: 16px;
    color: #fff;
}
.act-red {
    background: linear-gradient(90deg, #e52a40, #d14f0e);
    box-shadow: 0 4px 10px rgba(226, 60, 40, 0.25);
}
.act-green { background-color: #14744f; }
.act-dark { background-color: #1a1f25; }
.act-white {
    background-color: #fff;
    border: 1px solid #d8dbe0;
    color: #3a4048;
}
.act-ico {
    flex: none;
    width: 36px;
    height: 40px;
    border-radius: 14px;
    display: flex;
    align-items: center;
    justify-content: center;
}
.act-ico.green {
    background-color: #14744f;
    color: #fff;
}
.act-ico.more {
    gap: 2px;
    background-color: #fff;
    border: 1px solid #d8dbe0;
    box-shadow: 0 3px 8px rgba(26, 31, 37, 0.06);
}
.more span {
    width: 3px;
    height: 3px;
    border-radius: 50%;
    background-color: #3a4048;
}
.more-below {
    position: absolute;
    left: 50%;
    bottom: 8px;
    transform: translateX(-50%);
    width: 144px;
    height: 26px;
    display: flex;
    align-items: center;
    justify-content: center;
    gap: 6px;
    border-radius: 13px;
    background-color: #1a1f25;
    color: #fff;
    font-size: 12.5px;
    font-weight: 700;
    letter-spacing: -0.3px;
    white-space: nowrap;
}
.more-below .ico {
    width: 12px;
    height: 12px;
}
```
